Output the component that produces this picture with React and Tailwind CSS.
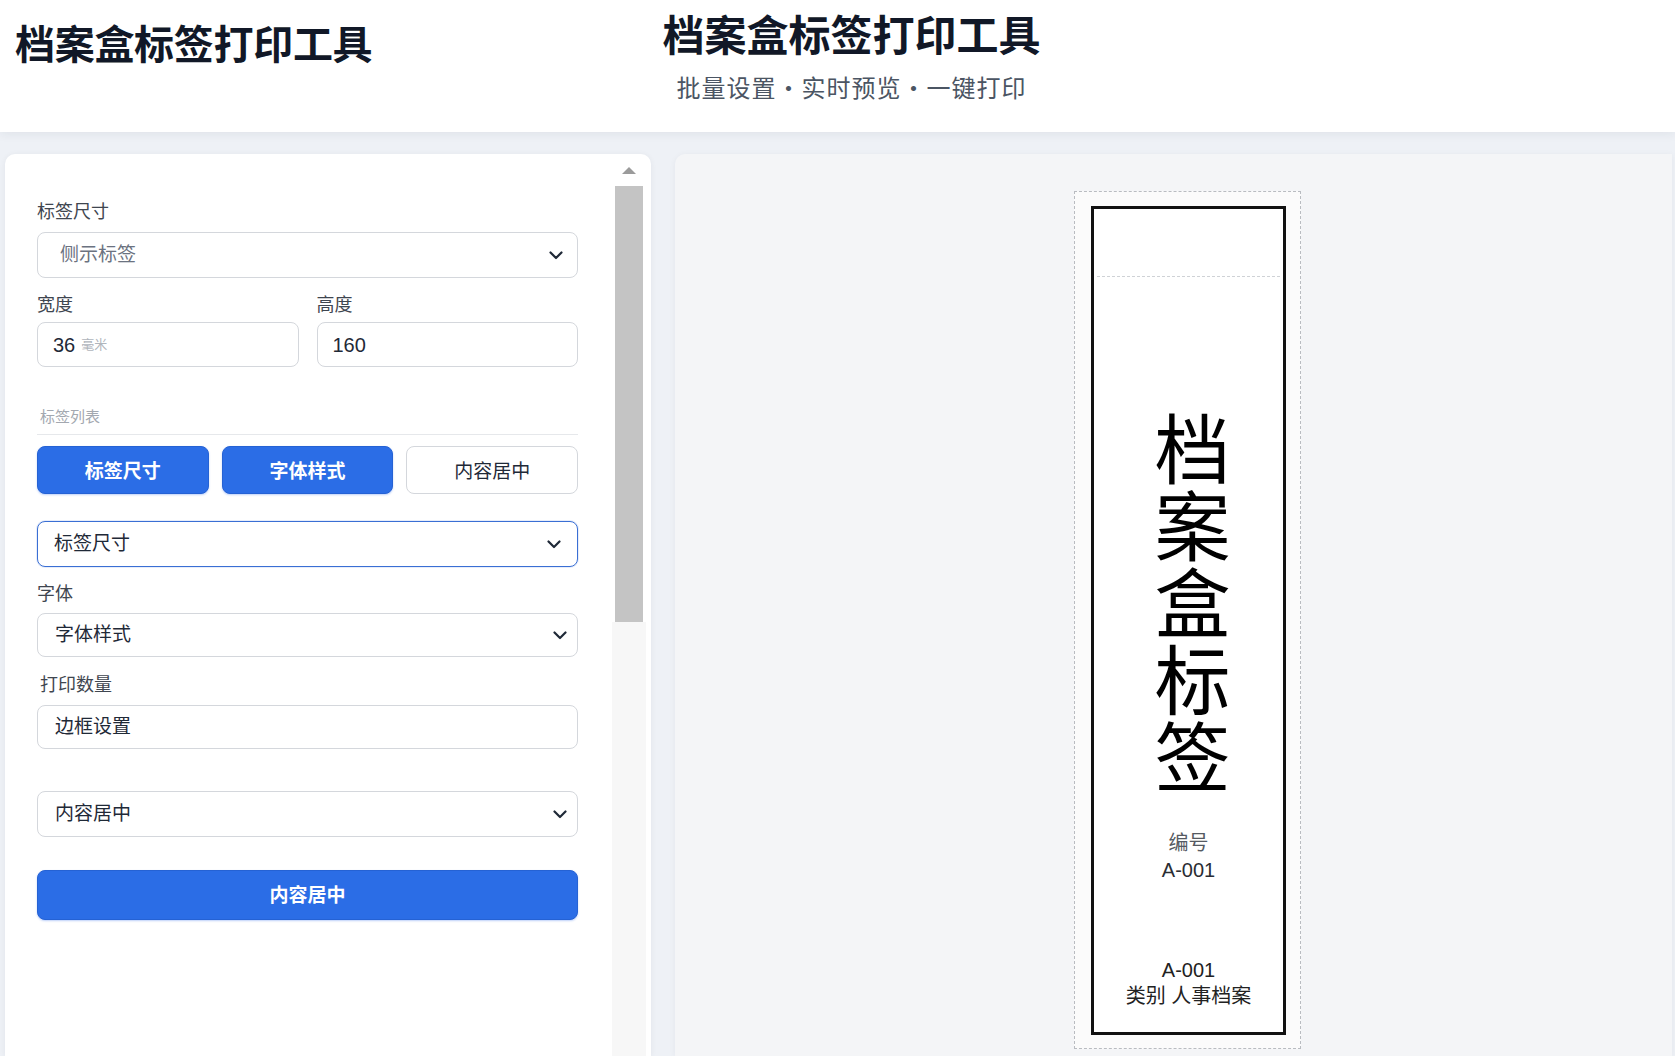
import React from "react";

const FONT = { fontFamily: '"Liberation Sans", "Noto Sans CJK SC", sans-serif' };

function Chevron() {
  return (
    <svg width="14" height="9" viewBox="0 0 14 9" fill="none">
      <polyline points="1.5,1.5 7,7 12.5,1.5" stroke="#1f2937" strokeWidth="2.2" strokeLinecap="round" strokeLinejoin="round" />
    </svg>
  );
}

function Label({ children, className = "" }) {
  return <div className={"text-[18px] leading-[24px] text-[#3f4650] " + className}>{children}</div>;
}

function SelectBox({ text, className = "", textClass = "text-[#1f2937]", pl = "pl-[17px]", pr = "pr-[17px]", focused = false }) {
  return (
    <div
      className={
        "flex items-center justify-between rounded-[8px] bg-white " +
        (focused ? "border-[1.5px] border-[#3a6fd4] shadow-[0_0_0_1px_rgba(59,111,212,0.12)] " : "border border-[#d4d7dc] ") +
        pl + " " + pr + " " + className
      }
    >
      <span className={"text-[19px] pt-[1px] " + textClass}>{text}</span>
      <Chevron />
    </div>
  );
}

export default function App() {
  return (
    <div className="h-[1056px] w-full overflow-hidden bg-[#eef1f6] flex flex-col" style={FONT}>
      {/* Header */}
      <header className="h-[132px] shrink-0 bg-white shadow-[0_2px_10px_rgba(30,41,59,0.07)] grid grid-cols-[1fr_auto_1fr] relative z-10">
        <div className="pl-[15px] pt-[21px]">
          <h1 className="text-[40px] leading-[48px] font-bold text-[#111827] tracking-[-0.3px]">档案盒标签打印工具</h1>
        </div>
        <div className="ml-[28px] pt-[13px] flex flex-col items-center">
          <div className="text-[42px] leading-[48px] font-bold text-[#111827]">档案盒标签打印工具</div>
          <div className="mt-[10px] text-[24px] leading-[32px] tracking-[1px] text-[#4b5563]" style={{ fontFamily: '"Noto Sans CJK SC", sans-serif' }}>批量设置・实时预览・一键打印</div>
        </div>
        <div />
      </header>

      {/* Main */}
      <main className="flex-1 flex gap-[24px] pt-[22px] pl-[5px] pr-[3px] min-h-0">
        {/* Left card */}
        <section className="w-[646px] shrink-0 bg-white rounded-t-[10px] shadow-[0_1px_6px_rgba(30,41,59,0.06)] flex">
          <div className="flex-1 pl-[32px] pr-[34px] pt-[46px] flex flex-col">
            <Label>标签尺寸</Label>
            <SelectBox text="侧示标签" className="mt-[8px] h-[46px]" textClass="text-[#6b7280] text-[18px]" pl="pl-[22px]" pr="pr-[14px]" />

            <div className="mt-[15px] grid grid-cols-2 gap-[18px]">
              <div className="flex flex-col">
                <Label className="text-[17px]">宽度</Label>
                <div className="mt-[5px] h-[45px] rounded-[8px] border border-[#d4d7dc] flex items-center pl-[15px] gap-[6px]">
                  <span className="text-[20px] text-[#1f2937]">36</span>
                  <span className="text-[13px] text-[#b0b5bc]">毫米</span>
                </div>
              </div>
              <div className="flex flex-col">
                <Label className="text-[17px]">高度</Label>
                <div className="mt-[5px] h-[45px] rounded-[8px] border border-[#d4d7dc] flex items-center pl-[15px]">
                  <span className="text-[20px] text-[#1f2937]">160</span>
                </div>
              </div>
            </div>

            <div className="mt-[39px] pl-[3px] text-[15px] leading-[22px] text-[#a3a8b0]">标签列表</div>
            <div className="mt-[6px] h-px bg-[#e6e8eb]" />

            <div className="mt-[11px] grid grid-cols-3 gap-[13px]">
              <button className="h-[48px] pt-[5px] rounded-[8px] bg-[#2b6de6] border border-[#2562d4] text-white text-[19px] font-bold shadow-[0_1px_2px_rgba(37,99,235,0.3)]">标签尺寸</button>
              <button className="h-[48px] pt-[5px] rounded-[8px] bg-[#2b6de6] border border-[#2562d4] text-white text-[19px] font-bold shadow-[0_1px_2px_rgba(37,99,235,0.3)]">字体样式</button>
              <button className="h-[48px] pt-[5px] rounded-[8px] bg-white border border-[#d4d7dc] text-[#1f2937] text-[19px]">内容居中</button>
            </div>

            <SelectBox text="标签尺寸" focused className="mt-[27px] h-[46px]" pl="pl-[16px]" pr="pr-[16px]" />

            <Label className="mt-[15px]">字体</Label>
            <SelectBox text="字体样式" className="mt-[7px] h-[44px]" pr="pr-[10px]" />

            <Label className="mt-[16px] pl-[3px]">打印数量</Label>
            <div className="mt-[8px] h-[44px] rounded-[8px] border border-[#d4d7dc] flex items-center pl-[17px]">
              <span className="text-[19px] pt-[1px] text-[#1f2937]">边框设置</span>
            </div>

            <SelectBox text="内容居中" className="mt-[42px] h-[46px]" pr="pr-[10px]" />

            <button className="mt-[33px] h-[50px] pt-[2px] rounded-[8px] bg-[#2b6de6] border border-[#2562d4] text-white text-[19px] font-bold shadow-[0_1px_2px_rgba(37,99,235,0.3)]">内容居中</button>
          </div>

          {/* Scrollbar */}
          <div className="w-[34px] mr-[5px] flex flex-col">
            <div className="h-[32px] flex items-center justify-center">
              <svg width="14" height="7" viewBox="0 0 14 7">
                <polygon points="7,0 14,7 0,7" fill="#9b9b9b" />
              </svg>
            </div>
            <div className="h-[436px] mx-[3px] bg-[#c4c4c4]" />
            <div className="flex-1 bg-[#f7f7f7]" />
          </div>
        </section>

        {/* Right preview */}
        <section className="flex-1 bg-[#f4f5f7] rounded-tl-[10px] shadow-[0_1px_6px_rgba(30,41,59,0.05)] flex justify-center pl-[28px] pt-[37px]">
          <div className="w-[227px] h-[858px] shrink-0 border border-dashed border-[#b9bcc1] bg-[#fbfbfb] pt-[14px] pl-[16px] pr-[14px]">
            <div className="h-[829px] border-[3px] border-[#111111] bg-white flex flex-col items-center">
              <div className="h-[68px] w-[calc(100%-6px)] shrink-0 border-b border-dashed border-[#cfd2d6]" />
              <div
                className="mt-[130px] ml-[8px] w-[76px] text-center break-all text-[76px] leading-[77px] text-black"
                style={{ fontFamily: '"Noto Sans CJK SC", sans-serif' }}
              >
                档案盒标签
              </div>
              <div className="mt-[38px] flex flex-col items-center text-[20px] leading-[27px]">
                <div className="text-[#555a62]">编号</div>
                <div className="text-[#2a2d33]">A-001</div>
              </div>
              <div className="mt-auto mb-[23px] flex flex-col items-center text-[20px] leading-[26px] text-[#222]">
                <div>A-001</div>
                <div>类别 人事档案</div>
              </div>
            </div>
          </div>
        </section>
      </main>
    </div>
  );
}
